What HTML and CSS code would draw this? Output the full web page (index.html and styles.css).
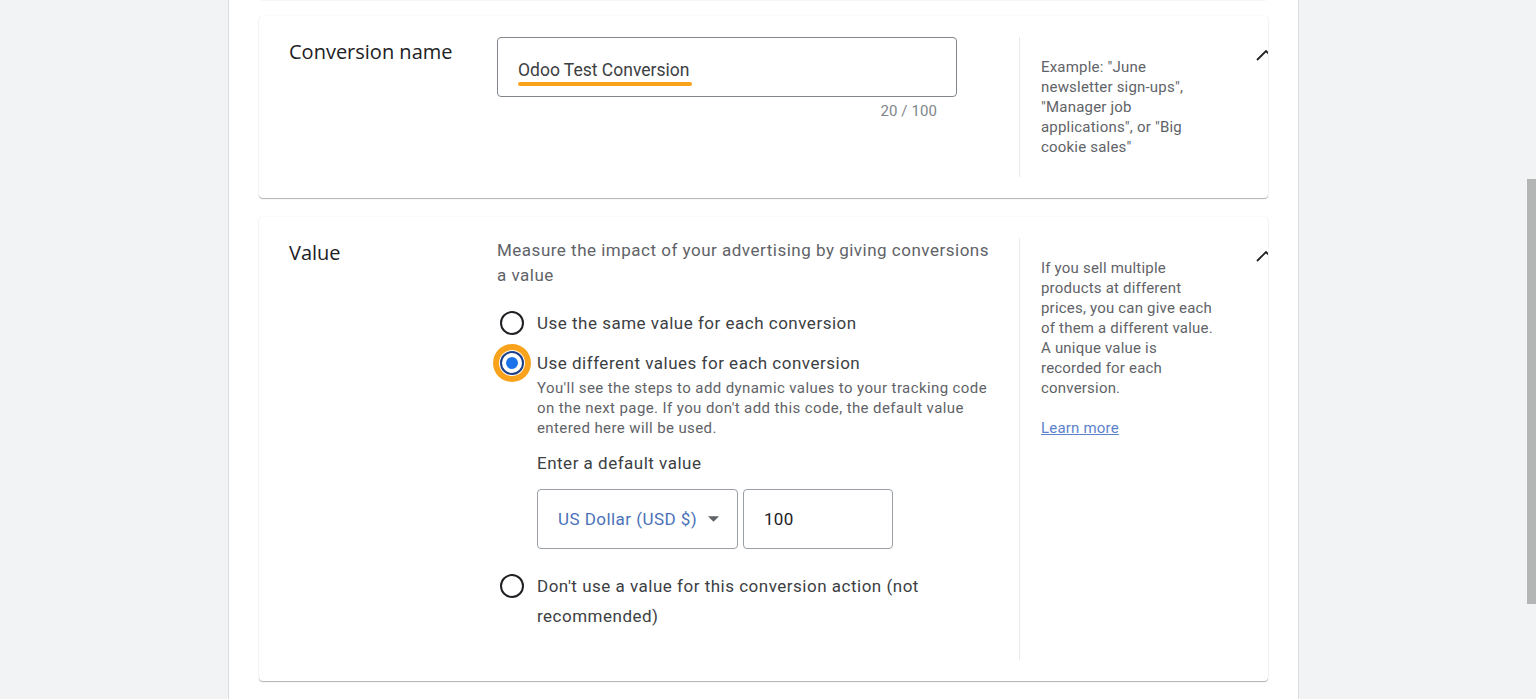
FILE: index.html
```html
<!DOCTYPE html>
<html lang="en">
  <head>
    <meta charset="UTF-8" />
    <meta name="viewport" content="width=device-width, initial-scale=1.0" />
    <title>New conversion action</title>
    <link rel="stylesheet" href="styles.css">
  </head>
  <body>
    <main class="settings-panel">
      <div class="card card-stub"></div>

      <section class="card">
        <div class="card-row">
          <h2 class="card-label">Conversion name</h2>

          <div class="card-content">
            <label class="text-field">
              <input
                class="text-field-input"
                type="text"
                value="Odoo Test Conversion"
                aria-label="Conversion name"
              />
              <span class="highlight-mark"></span>
            </label>
            <div class="char-count">20 / 100</div>
          </div>

          <aside class="card-help">
            <p class="help-text">
              Example: "June newsletter sign-ups", "Manager job applications",
              or "Big cookie sales"
            </p>
            <button class="collapse-button" aria-label="Collapse">
              <svg viewBox="0 0 24 24" width="24" height="24">
                <polyline points="3,13 12,4 21,13" />
              </svg>
            </button>
          </aside>
        </div>
      </section>

      <section class="card">
        <div class="card-row">
          <h2 class="card-label">Value</h2>

          <div class="card-content is-value">
            <p class="section-intro">
              Measure the impact of your advertising by giving conversions a
              value
            </p>

            <div class="radio-group" role="radiogroup">
              <div class="radio-option">
                <span class="radio" role="radio" aria-checked="false"></span>
                <div class="radio-body">
                  <div class="radio-label">
                    Use the same value for each conversion
                  </div>
                </div>
              </div>

              <div class="radio-option">
                <span
                  class="radio is-checked is-highlighted"
                  role="radio"
                  aria-checked="true"
                ></span>
                <div class="radio-body">
                  <div class="radio-label">
                    Use different values for each conversion
                  </div>
                  <p class="radio-hint">
                    You'll see the steps to add dynamic values to your tracking
                    code on the next page. If you don't add this code, the
                    default value entered here will be used.
                  </p>
                  <div class="default-label">Enter a default value</div>
                  <div class="default-value">
                    <button class="currency-select">
                      <span>US Dollar (USD $)</span>
                      <svg viewBox="0 0 10 5" width="11" height="6">
                        <polygon points="0,0 10,0 5,5" />
                      </svg>
                    </button>
                    <input
                      class="amount-input"
                      type="text"
                      value="100"
                      aria-label="Default value"
                    />
                  </div>
                </div>
              </div>

              <div class="radio-option">
                <span class="radio" role="radio" aria-checked="false"></span>
                <div class="radio-body">
                  <div class="radio-label">
                    Don't use a value for this conversion action (not
                    recommended)
                  </div>
                </div>
              </div>
            </div>
          </div>

          <aside class="card-help">
            <div class="help-text">
              <p>
                If you sell multiple products at different prices, you can give
                each of them a different value. A unique value is recorded for
                each conversion.
              </p>
              <a class="help-link" href="#">Learn more</a>
            </div>
            <button class="collapse-button" aria-label="Collapse">
              <svg viewBox="0 0 24 24" width="24" height="24">
                <polyline points="3,13 12,4 21,13" />
              </svg>
            </button>
          </aside>
        </div>
      </section>
    </main>

    <div class="scrollbar-thumb"></div>
  </body>
</html>
```

FILE: styles.css
```css
:root {
  --page-bg: #f1f3f4;
  --panel-border: #dadce0;
  --title-color: #202124;
  --text-color: #3c4043;
  --muted-color: #5f6368;
  --field-border: #9aa0a6;
  --link-color: #5b82cc;
  --select-color: #4a72b8;
  --accent: #1a73e8;
  --highlight: #f9a21b;
}

*,
*::before,
*::after {
  box-sizing: border-box;
  margin: 0;
  padding: 0;
}

body {
  font-family: Roboto, "Liberation Sans", Arial, sans-serif;
  background-color: var(--page-bg);
  color: var(--text-color);
  height: 100vh;
  overflow: hidden;
}

.settings-panel {
  width: 1071px;
  min-height: 100vh;
  margin-left: 228px;
  padding: 0 30px;
  background-color: #ffffff;
  border-left: 1px solid var(--panel-border);
  border-right: 1px solid var(--panel-border);
  display: flex;
  flex-direction: column;
  gap: 19px;
}

.card {
  background-color: #ffffff;
  border-radius: 4px;
  box-shadow: 0 1px 1px rgba(60, 64, 67, 0.4),
    0 0 2px rgba(60, 64, 67, 0.08);
  overflow: hidden;
}

.card-stub {
  height: 10px;
  margin-top: -11px;
  margin-bottom: -2px;
}

.card-row {
  display: grid;
  grid-template-columns: 208px 522px 1fr;
  padding: 21px 0 21px 30px;
}

.card-label {
  font-family: "Open Sans", sans-serif;
  font-size: 20px;
  font-weight: 400;
  line-height: 26px;
  color: var(--title-color);
  padding-top: 2px;
}

/* name field */

.text-field {
  display: block;
  position: relative;
  width: 460px;
}

.text-field-input {
  width: 100%;
  height: 60px;
  padding: 5px 20px 0;
  border: 1px solid #80868b;
  border-radius: 4px;
  font-family: Roboto, sans-serif;
  font-size: 17.5px;
  color: var(--text-color);
  background: transparent;
  outline: none;
}

/* orange marker drawn over the typed text */
.highlight-mark {
  position: absolute;
  left: 21px;
  top: 45px;
  width: 174px;
  height: 4px;
  border-radius: 2px;
  background-color: var(--highlight);
}

.char-count {
  width: 460px;
  padding-right: 20px;
  margin-top: 4px;
  text-align: right;
  font-size: 15px;
  line-height: 20px;
  letter-spacing: 0.1px;
  color: #80868b;
}

/* help column */

.card-help {
  display: flex;
  border-left: 1px solid #e8eaed;
  padding: 20px 0 20px 21px;
}

.help-text {
  width: 172px;
  font-size: 15px;
  line-height: 20px;
  letter-spacing: 0.2px;
  color: var(--muted-color);
}

.help-text p {
  margin-bottom: 20px;
}

.help-link {
  color: var(--link-color);
}

.collapse-button {
  margin-left: auto;
  margin-top: -10px;
  margin-right: -10px;
  width: 24px;
  height: 24px;
  flex-shrink: 0;
  border: none;
  background: none;
  cursor: pointer;
}

.collapse-button svg {
  display: block;
  fill: none;
  stroke: #202124;
  stroke-width: 1.8;
}

/* value section */

.card-content.is-value {
  padding-bottom: 24px;
}

.section-intro {
  width: 496px;
  font-size: 17px;
  line-height: 25px;
  letter-spacing: 0.5px;
  color: var(--muted-color);
}

.radio-group {
  margin-top: 15px;
  display: flex;
  flex-direction: column;
}

.radio-option {
  display: flex;
  align-items: flex-start;
  gap: 13px;
  padding: 5px 0;
}

.radio {
  flex-shrink: 0;
  width: 24px;
  height: 24px;
  margin: 3px 0 0 3px;
  border: 2px solid #202124;
  border-radius: 50%;
  display: grid;
  place-items: center;
}

.radio.is-checked {
  border-color: #1c3f8c;
}

.radio.is-checked::after {
  content: "";
  width: 12px;
  height: 12px;
  border-radius: 50%;
  background-color: var(--accent);
}

/* orange ring marking the chosen option */
.radio.is-highlighted {
  box-shadow: 0 0 0 1px #ffffff, 0 0 0 7px var(--highlight);
}

.radio-body {
  width: 460px;
}

.radio-label {
  font-size: 17px;
  line-height: 30px;
  letter-spacing: 0.5px;
  color: var(--text-color);
}

.radio-hint {
  font-size: 15px;
  line-height: 20px;
  letter-spacing: 0.4px;
  color: var(--muted-color);
}

.default-label {
  margin-top: 13px;
  font-size: 17px;
  line-height: 24px;
  letter-spacing: 0.5px;
  color: var(--text-color);
}

.default-value {
  display: flex;
  gap: 5px;
  margin: 14px 0 12px;
}

.currency-select {
  width: 201px;
  height: 60px;
  display: flex;
  align-items: center;
  justify-content: space-between;
  padding: 0 18px 0 20px;
  border: 1px solid var(--field-border);
  border-radius: 4px;
  background: #ffffff;
  font-family: Roboto, sans-serif;
  font-size: 17px;
  letter-spacing: 0.45px;
  color: var(--select-color);
  cursor: pointer;
}

.currency-select svg {
  fill: var(--muted-color);
}

.amount-input {
  width: 150px;
  height: 60px;
  padding: 0 20px;
  border: 1px solid var(--field-border);
  border-radius: 4px;
  font-family: Roboto, sans-serif;
  font-size: 17px;
  letter-spacing: 0.3px;
  color: var(--title-color);
  outline: none;
}

.scrollbar-thumb {
  position: fixed;
  top: 179px;
  right: 0;
  width: 9px;
  height: 425px;
  background-color: #b4b6b6;
}
```
